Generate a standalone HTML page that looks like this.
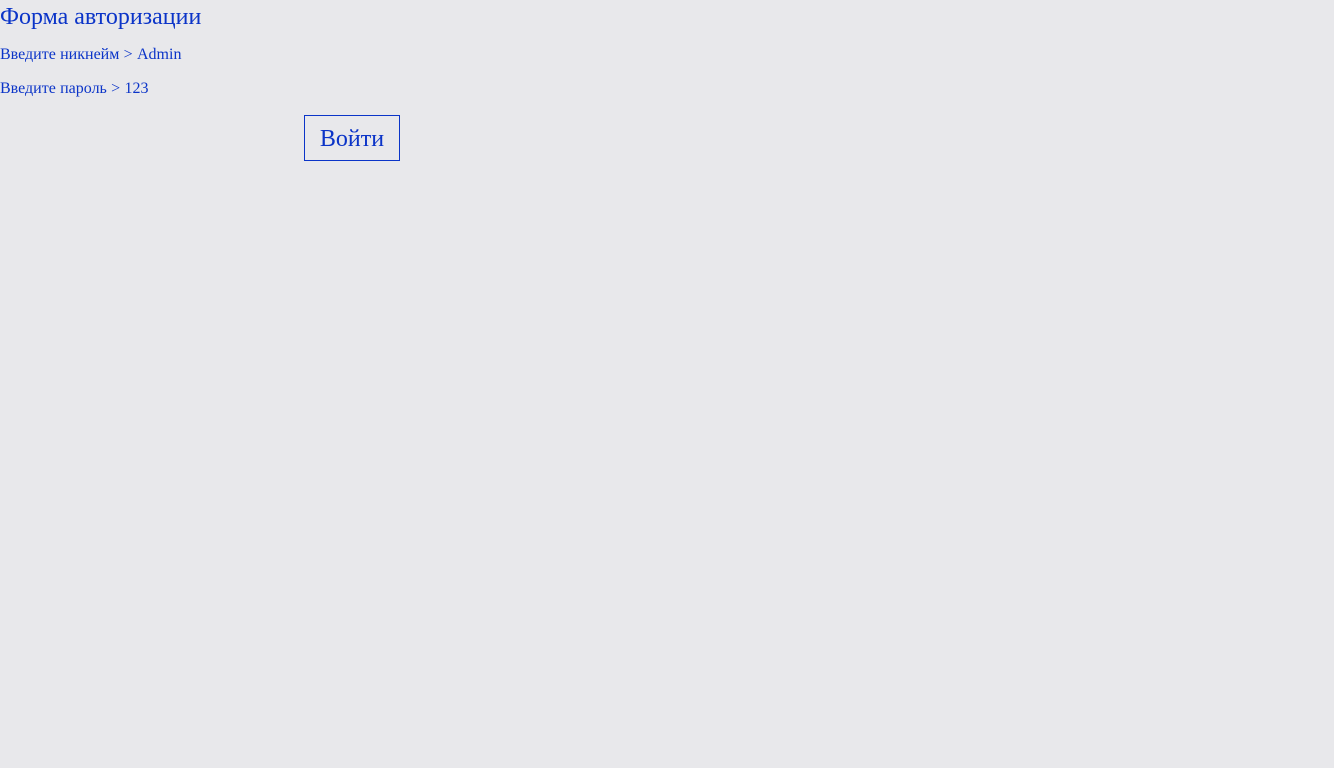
<!DOCTYPE html>
<html><head><meta charset="utf-8"><style>
html,body{margin:0;padding:0;background:#e8e8eb;width:1334px;height:768px;overflow:hidden;font-family:"Liberation Serif",serif;color:#0b34c8;}
.t{position:absolute;left:0;top:3px;font-size:24px;line-height:28px;white-space:nowrap}
.l{position:absolute;left:0;font-size:16px;line-height:18px;white-space:nowrap;word-spacing:0.3px}
.b{position:absolute;left:304px;top:115px;width:94px;height:44px;border:1px solid #0b34c8;font-size:24px;line-height:46px;text-align:center}
</style></head><body>
<div class="t">Форма авторизации</div>
<div class="l" style="top:46px">Введите никнейм &gt; Admin</div>
<div class="l" style="top:80px">Введите пароль &gt; 123</div>
<div class="b">Войти</div>
</body></html>
